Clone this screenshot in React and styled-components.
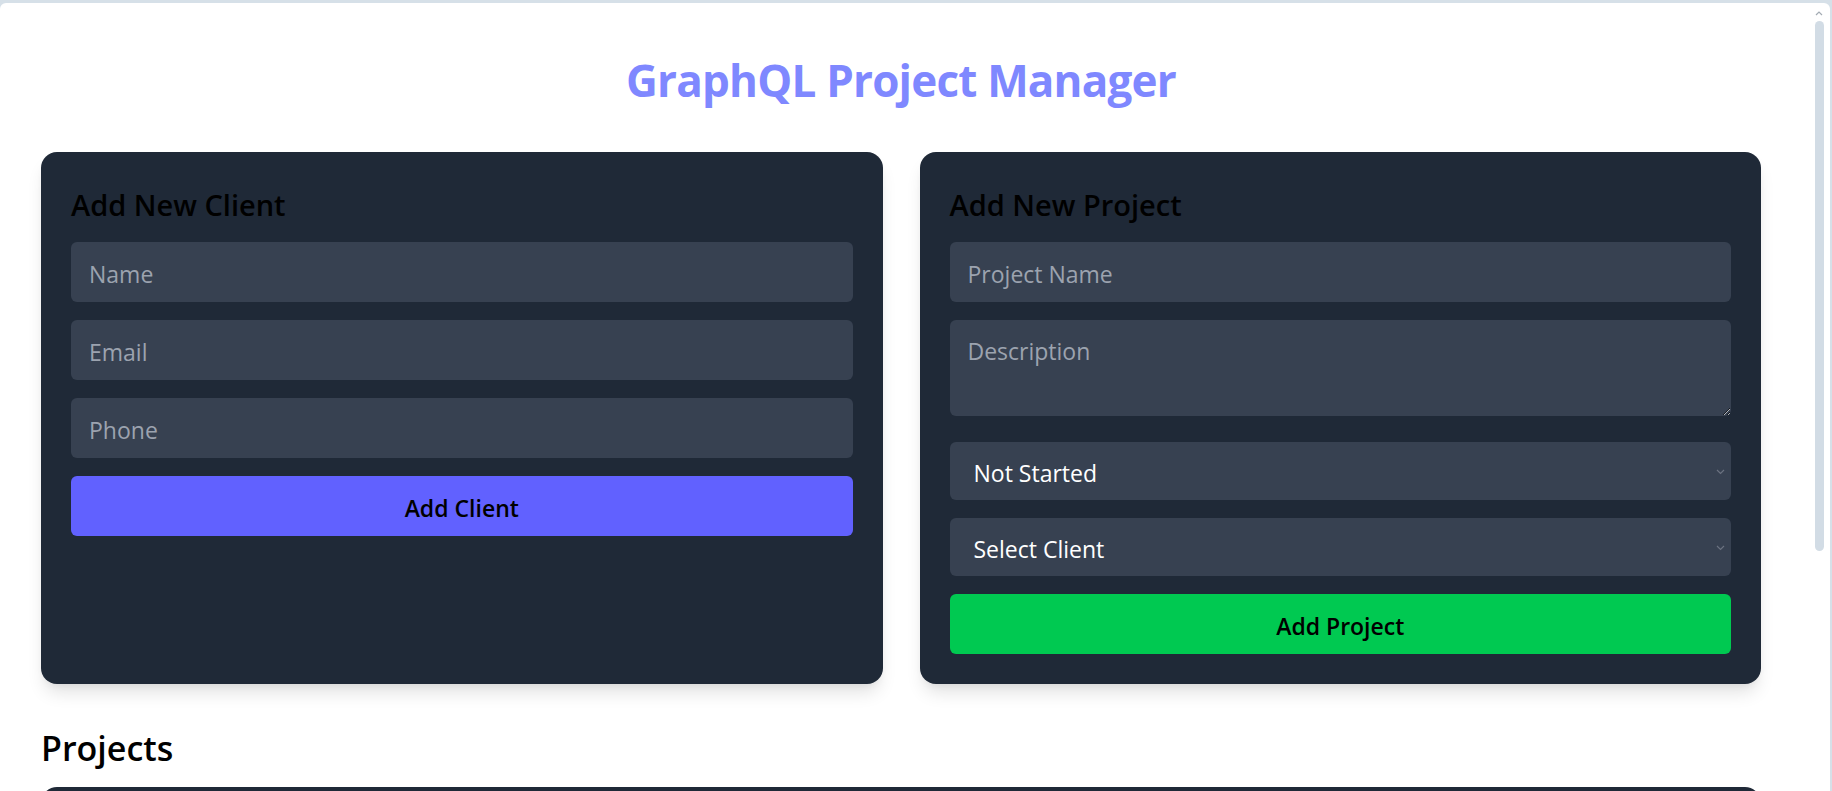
import React from "react";
import styled, { createGlobalStyle } from "styled-components";

const GlobalStyle = createGlobalStyle`
  html, body {
    margin: 0;
    padding: 0;
    height: 791px;
    overflow: hidden;
    background: #d6e0e8;
  }
  * {
    box-sizing: border-box;
  }
`;

const Frame = styled.div`
  height: 791px;
  padding: 3px 2px 0 0;
  background: #d6e0e8;
`;

const Window = styled.div`
  height: 788px;
  background: #ffffff;
  border-radius: 6px 6px 0 0;
  display: flex;
  overflow: hidden;
  font-family: "Open Sans", "Noto Sans", sans-serif;
`;

const Main = styled.main`
  flex: 1;
  padding: 0 41px;
`;

const Rail = styled.div`
  width: 28px;
  display: flex;
  flex-direction: column;
  align-items: center;
  padding: 8px 0 0 6px;
  gap: 5px;
`;

const Thumb = styled.div`
  width: 9px;
  height: 530px;
  border-radius: 5px;
  background: #d2dce5;
`;

const Title = styled.h1`
  margin: 48px 0 43px;
  font-size: 44px;
  line-height: 58px;
  letter-spacing: -0.8px;
  font-weight: 700;
  text-align: center;
  color: #7f88ff;
`;

const FormGrid = styled.div`
  display: grid;
  grid-template-columns: 1fr 1fr;
  gap: 37px;
`;

const Card = styled.section`
  background: #1f2937;
  border-radius: 16px;
  padding: 30px;
  box-shadow: 0 12px 18px -4px rgba(0, 0, 0, 0.12), 0 4px 8px -4px rgba(0, 0, 0, 0.08);
  display: flex;
  flex-direction: column;
`;

const CardTitle = styled.h2`
  margin: 0 0 17px;
  padding-top: 3px;
  font-size: 29px;
  line-height: 40px;
  font-weight: 600;
  color: #000000;
`;

const fieldBase = `
  width: 100%;
  border: none;
  border-radius: 6px;
  background: #374151;
  color: #ffffff;
  font-family: "Open Sans", "Noto Sans", sans-serif;
  font-size: 23px;
  outline: none;
  &::placeholder {
    color: #9ca3af;
  }
`;

const Input = styled.input`
  ${fieldBase}
  height: 60px;
  padding: 3px 18px 0;
  margin-bottom: 18px;
`;

const TextArea = styled.textarea`
  ${fieldBase}
  display: block;
  height: 96px;
  padding: 15px 18px 9px;
  margin-bottom: 26px;
  resize: vertical;
`;

const SelectWrap = styled.div`
  position: relative;
  margin-bottom: 18px;
`;

const Select = styled.select`
  ${fieldBase}
  appearance: none;
  height: 58px;
  padding: 3px 24px 0;
`;

const Chevron = styled.svg`
  position: absolute;
  right: 6px;
  top: 50%;
  width: 9px;
  height: 6px;
  margin-top: -2px;
  pointer-events: none;
`;

const Button = styled.button`
  height: 60px;
  width: 100%;
  border: none;
  border-radius: 6px;
  padding: 3px 0 0;
  background: ${({ $tone }) => ($tone === "green" ? "#00c951" : "#6161ff")};
  color: #000000;
  font-family: "Open Sans", "Noto Sans", sans-serif;
  font-size: 23px;
  font-weight: 600;
  cursor: pointer;
`;

const SectionTitle = styled.h2`
  margin: 42px 0 17px;
  font-size: 34px;
  line-height: 44px;
  font-weight: 600;
  color: #000000;
`;

const ProjectList = styled.div`
  height: 240px;
  background: #1f2937;
  border-radius: 16px;
`;

const ArrowDown = () => (
  <Chevron viewBox="0 0 9 6">
    <path d="M1 1l3.5 3.5L8 1" fill="none" stroke="#6b7280" strokeWidth="1.2" />
  </Chevron>
);

const App = () => {
  return (
    <>
      <GlobalStyle />
      <Frame>
        <Window>
          <Main>
            <Title>GraphQL Project Manager</Title>
            <FormGrid>
              <Card>
                <CardTitle>Add New Client</CardTitle>
                <Input placeholder="Name" />
                <Input placeholder="Email" />
                <Input placeholder="Phone" />
                <Button>Add Client</Button>
              </Card>
              <Card>
                <CardTitle>Add New Project</CardTitle>
                <Input placeholder="Project Name" />
                <TextArea placeholder="Description" />
                <SelectWrap>
                  <Select defaultValue="not">
                    <option value="not">Not Started</option>
                    <option value="progress">In Progress</option>
                    <option value="done">Completed</option>
                  </Select>
                  <ArrowDown />
                </SelectWrap>
                <SelectWrap>
                  <Select defaultValue="">
                    <option value="">Select Client</option>
                  </Select>
                  <ArrowDown />
                </SelectWrap>
                <Button $tone="green">Add Project</Button>
              </Card>
            </FormGrid>
            <SectionTitle>Projects</SectionTitle>
            <ProjectList />
          </Main>
          <Rail>
            <svg width="8" height="5" viewBox="0 0 8 5">
              <path d="M1 4l3-3 3 3" fill="none" stroke="#a3abb3" strokeWidth="1.2" />
            </svg>
            <Thumb />
          </Rail>
        </Window>
      </Frame>
    </>
  );
};

export default App;
